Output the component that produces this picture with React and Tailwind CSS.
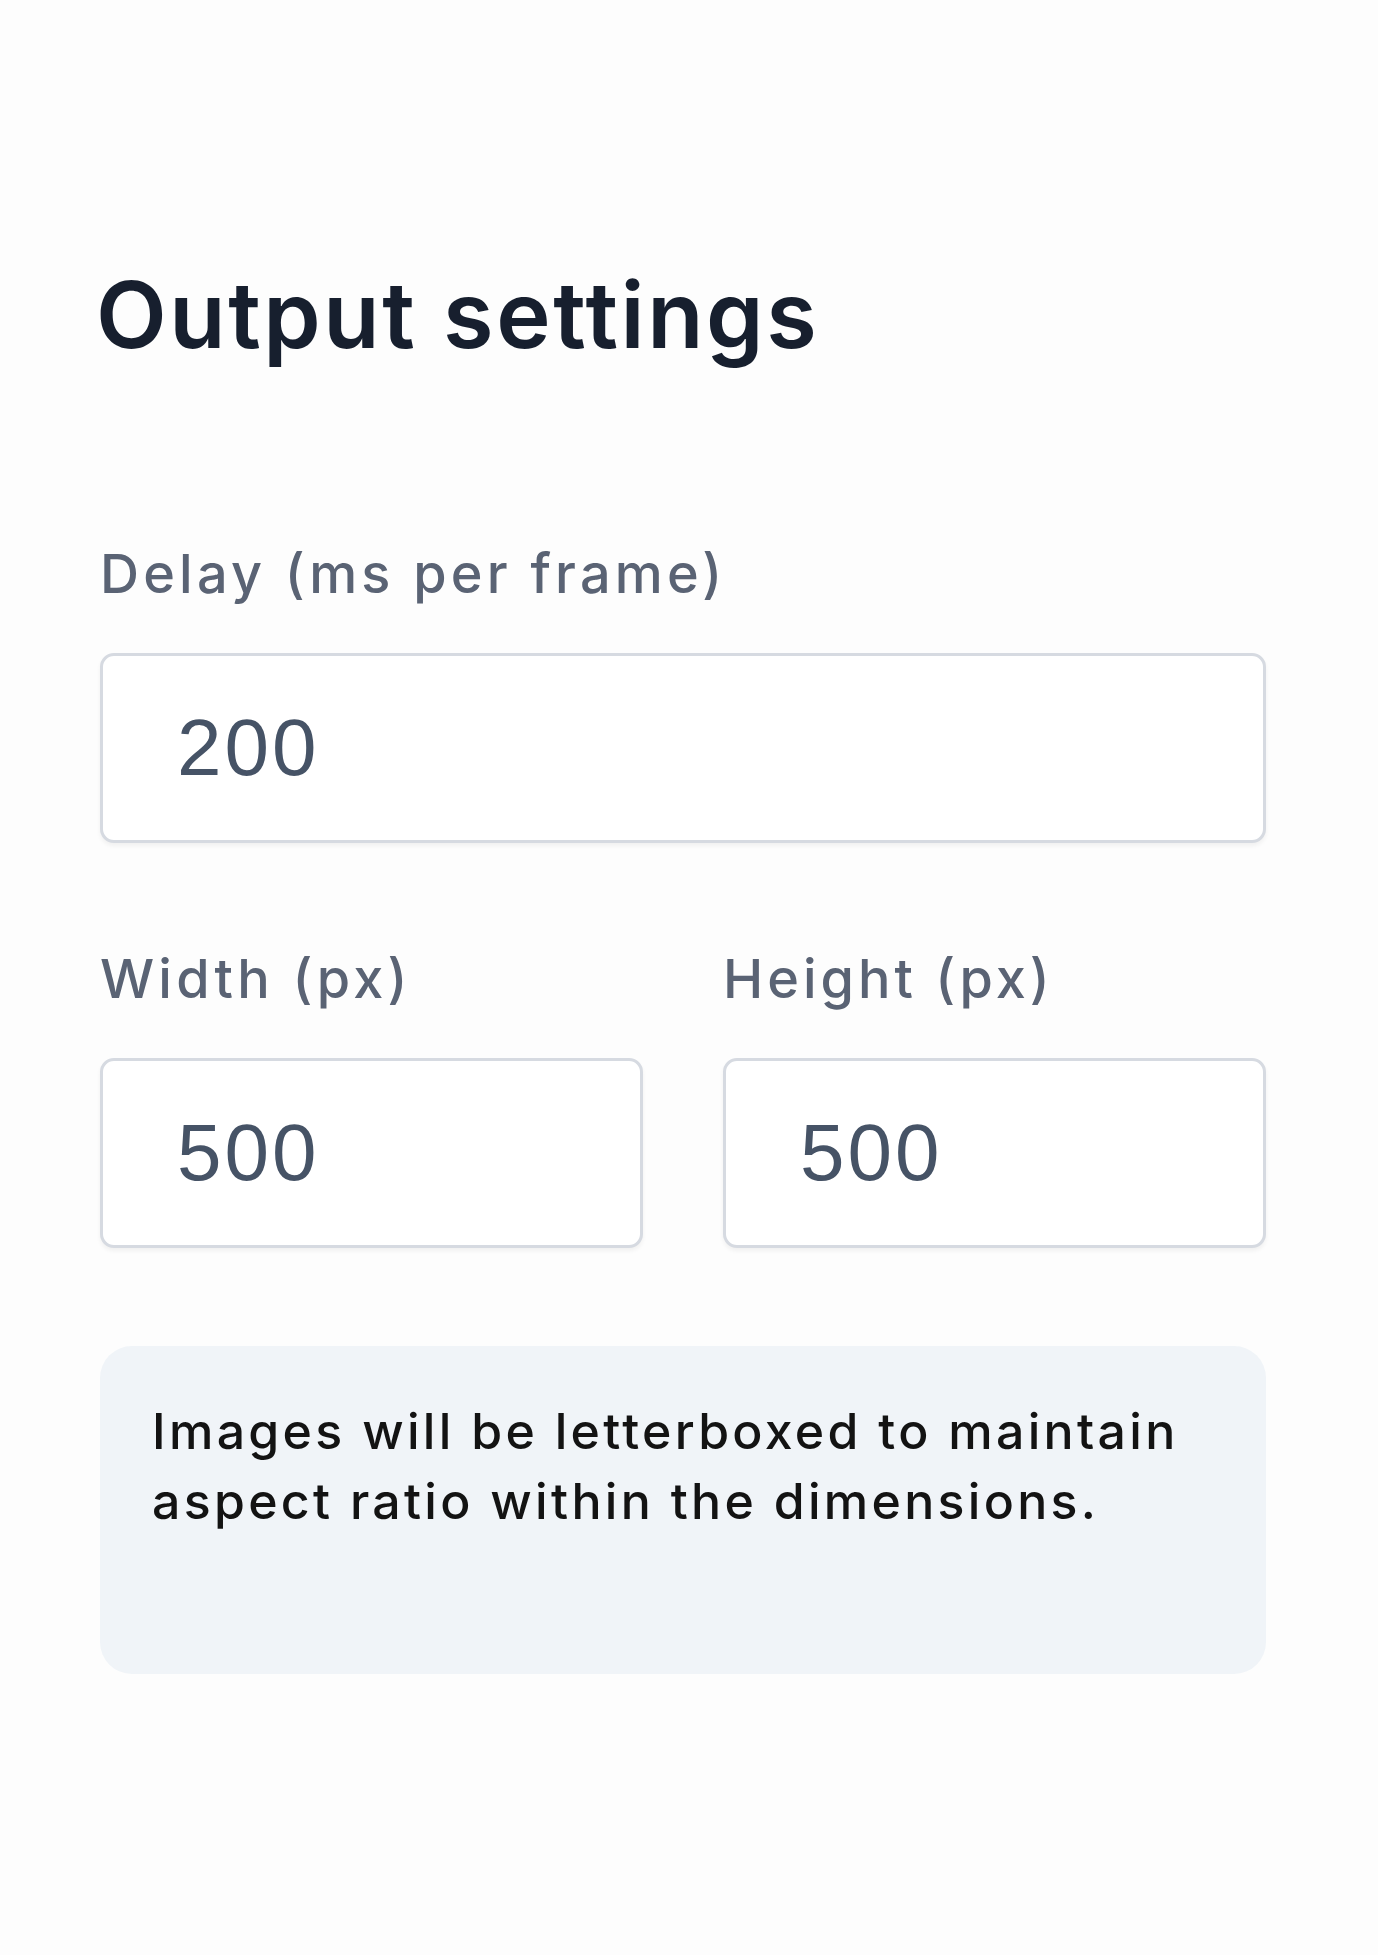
import React from "react";

const inputCls =
  "mt-[52px] block h-[190px] w-full rounded-[14px] border-[3px] border-[#d6dae1] bg-white pl-[74px] font-['Liberation_Sans',Arial,sans-serif] text-[80px] tracking-[3px] text-[#465366] shadow-[0_3px_4px_rgba(0,0,0,0.05)] outline-none";

export default function App() {
  return (
    <div className="min-h-[1955px] w-full bg-[#fdfdfd] pl-[100px] pr-[112px] pt-[269px] font-['Inter',sans-serif]">
      <h1 className="-ml-[4px] text-[92px] leading-[92px] font-semibold tracking-[2.6px] text-[#171f2e]">
        Output settings
      </h1>

      <label className="mt-[186px] block text-[54px] leading-[54px] font-medium tracking-[4.2px] text-[#5a6374]">
        Delay (ms per frame)
      </label>
      <input readOnly value="200" className={inputCls} />

      <div className="mt-[109px] grid grid-cols-2 gap-x-[80px]">
        <div>
          <label className="block text-[54px] leading-[54px] font-medium tracking-[4.2px] text-[#5a6374]">
            Width (px)
          </label>
          <input readOnly value="500" className={inputCls} />
        </div>
        <div>
          <label className="block text-[54px] leading-[54px] font-medium tracking-[4px] text-[#5a6374]">
            Height (px)
          </label>
          <input readOnly value="500" className={inputCls} />
        </div>
      </div>

      <div className="mt-[98px] h-[328px] rounded-[32px] bg-[#f0f4f8] pl-[52px] pr-[20px] pt-[50px]">
        <p className="text-[50px] leading-[70px] font-medium tracking-[3.3px] text-[#131313]">
          Images will be letterboxed to maintain
          <br />
          aspect ratio within the dimensions.
        </p>
      </div>
    </div>
  );
}
